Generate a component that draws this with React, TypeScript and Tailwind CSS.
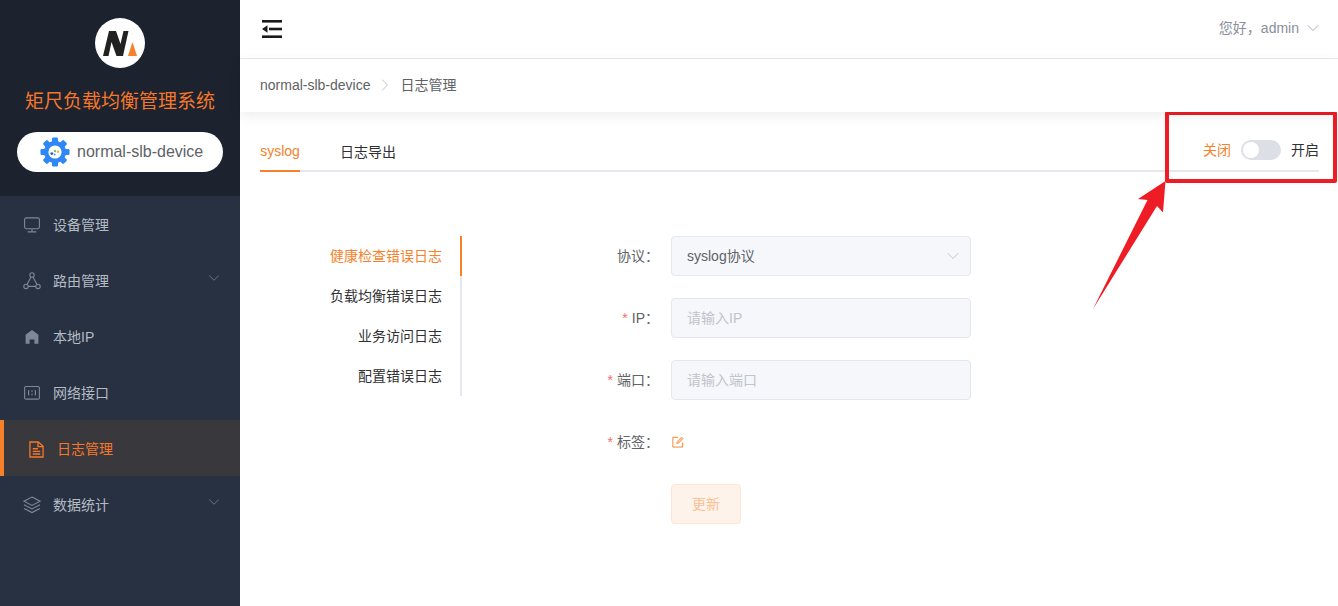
import { ChevronDown, ChevronRight } from "lucide-react";
import type { ReactNode } from "react";

const font = "font-['Liberation_Sans','Noto_Sans_CJK_SC',sans-serif]";

function Monitor() {
  return (
    <svg viewBox="0 0 16 16" className="h-4 w-4" fill="none" stroke="currentColor" strokeWidth="1.1">
      <rect x="0.6" y="0.9" width="14.8" height="10.8" rx="1.6" />
      <path d="M8 11.7v3M3.6 14.9h8.8" />
    </svg>
  );
}

function Triangle() {
  return (
    <svg viewBox="0 0 18 18" className="-ml-px h-[18px] w-[18px]" fill="none" stroke="currentColor" strokeWidth="1.1">
      <circle cx="9" cy="3" r="2.2" />
      <circle cx="3" cy="14.4" r="2.2" />
      <circle cx="15" cy="14.4" r="2.2" />
      <path d="M8 5 4 12.5M10 5l4 7.5M5.2 14.4h7.6" />
    </svg>
  );
}

function Home() {
  return (
    <svg viewBox="0 0 16 16" className="h-4 w-4" fill="currentColor">
      <path d="M8 1 14.4 5.8V14.8H10.4V10.4H5.6V14.8H1.6V5.8Z" />
    </svg>
  );
}

function Port() {
  return (
    <svg viewBox="0 0 16 16" className="h-4 w-4" fill="none" stroke="currentColor">
      <rect x="0.6" y="1.5" width="14.8" height="12.6" rx="1.4" strokeWidth="1.1" />
      <path d="M4.6 5.2v5M8 5.2v1.5M8 8.7v1.5M11.4 5.2v5" strokeWidth="1.2" />
    </svg>
  );
}

function FileDoc() {
  return (
    <svg viewBox="0 0 16 18" className="h-[17px] w-[15px]" fill="none" stroke="currentColor" strokeWidth="1.4">
      <path d="M1 1h9l5 4.6V17H1Z" />
      <path d="M9.6 1v5H15M4 8.2h5.5M4 11h8M4 13.8h8" />
    </svg>
  );
}

function Layers() {
  return (
    <svg viewBox="0 0 18 18" className="-ml-px h-[18px] w-[18px]" fill="none" stroke="currentColor" strokeWidth="1.1">
      <path d="M9 1 17 5.2 9 9.4 1 5.2Z" />
      <path d="M1 8.8 9 13 17 8.8M1 12.4 9 16.6 17 12.4" />
    </svg>
  );
}

function Gear() {
  return (
    <svg viewBox="0 0 30 30" className="h-[30px] w-[30px] shrink-0">
      <g fill="#2f86f6">
        <circle cx="15" cy="15" r="11" />
        <rect x="12" y="0.5" width="6" height="29" rx="1.2" />
        <rect x="12" y="0.5" width="6" height="29" rx="1.2" transform="rotate(45 15 15)" />
        <rect x="12" y="0.5" width="6" height="29" rx="1.2" transform="rotate(90 15 15)" />
        <rect x="12" y="0.5" width="6" height="29" rx="1.2" transform="rotate(135 15 15)" />
      </g>
      <circle cx="15" cy="15" r="6.6" fill="#fff" />
      <circle cx="11.8" cy="16.6" r="1.4" fill="#1f62c8" />
      <circle cx="14.6" cy="17.4" r="1" fill="#3fa0f0" />
      <circle cx="15" cy="14.2" r="1.1" fill="#6cbf5a" />
      <circle cx="18" cy="14.8" r="1.2" fill="#f0b040" />
    </svg>
  );
}

function Logo() {
  return (
    <div className="flex h-[50px] w-[50px] items-center justify-center rounded-full bg-white">
      <svg viewBox="0 0 50 50" className="h-[50px] w-[50px]">
        <path d="M8 38 14 13H21L25.5 26 28.5 13H33.5L28 38H21.5L16.5 24 13.5 38Z" fill="#222222" />
        <path d="M33 38 37.5 24 42 38Z" fill="#f5822a" />
      </svg>
    </div>
  );
}

const menu: { label: string; icon: ReactNode; sub?: boolean; active?: boolean }[] = [
  { label: "设备管理", icon: <Monitor /> },
  { label: "路由管理", icon: <Triangle />, sub: true },
  { label: "本地IP", icon: <Home /> },
  { label: "网络接口", icon: <Port /> },
  { label: "日志管理", icon: <FileDoc />, active: true },
  { label: "数据统计", icon: <Layers />, sub: true },
];

function Sidebar() {
  return (
    <aside className="flex w-[240px] shrink-0 flex-col bg-[#283142]">
      <div className="flex h-[196px] flex-col items-center bg-[#1c222e] pt-[18px]">
        <Logo />
        <h1 className="mt-5 text-[19px] leading-[28px] font-normal whitespace-nowrap text-[#f5772a]">矩尺负载均衡管理系统</h1>
        <div className="mt-4 flex h-10 w-[206px] items-center gap-[7px] rounded-[20px] bg-white pl-[23px] text-base text-[#606266]">
          <Gear />
          <span>normal-slb-device</span>
        </div>
      </div>
      <nav>
        {menu.map((item) =>
          item.active ? (
            <div key={item.label} className="flex h-14 items-center border-l-4 border-[#f5822a] bg-[#38383d] pt-0.5 pl-[25px] text-sm text-[#f5772a]">
              <span className="flex w-7 items-center">{item.icon}</span>
              <span>{item.label}</span>
            </div>
          ) : (
            <div key={item.label} className="relative flex h-14 items-center pt-0.5 pl-6 text-sm text-[#b4bbc4]">
              <span className="flex w-[29px] items-center text-[#7e8794]">{item.icon}</span>
              <span>{item.label}</span>
              {item.sub && <ChevronDown className="absolute top-[17px] right-[17px] h-[18px] w-[18px] text-[#6f7886]" strokeWidth={1.2} />}
            </div>
          )
        )}
      </nav>
    </aside>
  );
}

function Header() {
  return (
    <>
      <header className="flex h-[59px] shrink-0 items-center justify-between border-b border-[#e6e8ee] pr-[15px] pl-[22px]">
        <svg viewBox="0 0 20 18" className="h-[18px] w-5" fill="#1a1a1a">
          <rect x="0" y="0" width="20" height="2.6" />
          <rect x="7" y="7.7" width="13" height="2.6" />
          <rect x="0" y="15.4" width="20" height="2.6" />
          <path d="M0 9 5.5 5.2v7.6Z" />
        </svg>
        <div className="mb-[3px] flex items-center gap-1 text-sm text-[#8a8f99]">
          <span>您好，admin</span>
          <ChevronDown className="h-5 w-5 text-[#a8adb6]" strokeWidth={1.2} />
        </div>
      </header>
      <div className="relative z-10 flex h-[53px] shrink-0 items-center bg-white pb-0.5 pl-5 text-sm text-[#606266] shadow-[0_4px_12px_rgba(0,0,0,0.07)]">
        <span>normal-slb-device</span>
        <ChevronRight className="mx-[5px] h-5 w-5 text-[#c0c4cc]" strokeWidth={1.2} />
        <span>日志管理</span>
      </div>
    </>
  );
}

function Tabs() {
  return (
    <div className="flex h-[60px] items-end justify-between border-b-2 border-[#e4e7ed]">
      <div className="flex text-sm">
        <div className="relative -mb-0.5 flex h-10 w-10 items-center justify-center border-b-2 border-[#f5822a] text-[#f5822a]">syslog</div>
        <div className="-mb-0.5 flex h-10 items-center pl-10 text-[#303133]">日志导出</div>
      </div>
      <div className="mb-[10px] flex items-center gap-2.5 text-sm leading-5">
        <span className="text-[#f5822a]">关闭</span>
        <span className="flex h-5 w-10 items-center rounded-full bg-[#dcdfe6] px-0.5">
          <span className="h-4 w-4 rounded-full bg-white" />
        </span>
        <span className="text-[#303133]">开启</span>
      </div>
    </div>
  );
}

function SideTabs() {
  const items = ["健康检查错误日志", "负载均衡错误日志", "业务访问日志", "配置错误日志"];
  return (
    <ul className="ml-[20px] w-[182px] shrink-0 self-start border-r-2 border-[#e4e7ed] text-right text-sm">
      {items.map((t, i) => (
        <li
          key={t}
          className={
            i === 0
              ? "-mr-0.5 h-10 border-r-2 border-[#f5822a] pr-[18px] leading-10 text-[#f5822a]"
              : "h-10 pr-[18px] leading-10 text-[#303133]"
          }
        >
          {t}
        </li>
      ))}
    </ul>
  );
}

function Label({ text, required }: { text: string; required?: boolean }) {
  return (
    <span className="w-[121px] shrink-0 pr-3 text-right text-sm text-[#606266]">
      {required && <span className="mr-1 text-[#f56c6c]">*</span>}
      {text}：
    </span>
  );
}

function Field({ label, required, children }: { label: string; required?: boolean; children: ReactNode }) {
  return (
    <div className="flex h-10 items-center">
      <Label text={label} required={required} />
      <div className="relative flex h-10 w-[300px] items-center rounded border border-[#e4e7ed] bg-[#f5f7fa] pl-[15px] text-sm">
        {children}
      </div>
    </div>
  );
}

function Form() {
  return (
    <form className="ml-[88px] flex flex-col gap-[22px]">
      <Field label="协议">
        <span className="text-[#606266]">syslog协议</span>
        <ChevronDown className="absolute top-[9px] right-[7px] h-5 w-5 text-[#c0c4cc]" strokeWidth={1.2} />
      </Field>
      <Field label="IP" required>
        <span className="text-[#c0c4cc]">请输入IP</span>
      </Field>
      <Field label="端口" required>
        <span className="text-[#c0c4cc]">请输入端口</span>
      </Field>
      <div className="flex h-10 items-center">
        <Label text="标签" required />
        <svg viewBox="0 0 14 14" className="ml-px h-3 w-3" fill="none" stroke="#f5822a" strokeWidth="1.1">
          <path d="M7 1.5H1v11.4h11.4V7.5" />
          <path d="M5.5 8.8 6 6.6 11.2 1.2 13 3 7.8 8.4Z" fill="#fbc89f" strokeWidth="0.8" />
        </svg>
      </div>
      <div className="flex">
        <span className="w-[121px] shrink-0" />
        <button type="button" className="h-10 w-[70px] rounded border border-[#fde6d5] bg-[#fef3ea] text-sm text-[#f9c096]">
          更新
        </button>
      </div>
    </form>
  );
}

export default function App() {
  return (
    <div className={`${font} relative flex h-[606px] w-[1338px] overflow-hidden bg-white`}>
      <Sidebar />
      <div className="flex min-w-0 flex-1 flex-col">
        <Header />
        <main className="pr-[19px] pl-5">
          <Tabs />
          <div className="mt-[64px] flex">
            <SideTabs />
            <Form />
          </div>
        </main>
      </div>
      {/* red annotation drawn over the screenshot */}
      <div className="pointer-events-none absolute top-[111px] left-[1165px] h-[72px] w-[172px] rounded-[2px] border-4 border-[#ee1c25]" />
      <svg className="pointer-events-none absolute top-0 left-0 h-[606px] w-[1338px]" viewBox="0 0 1338 606">
        <path d="M1093 309 1147.5 200 1138 199 1165.5 181 1163 212.5 1157 206Z" fill="#ee1c25" />
      </svg>
    </div>
  );
}
